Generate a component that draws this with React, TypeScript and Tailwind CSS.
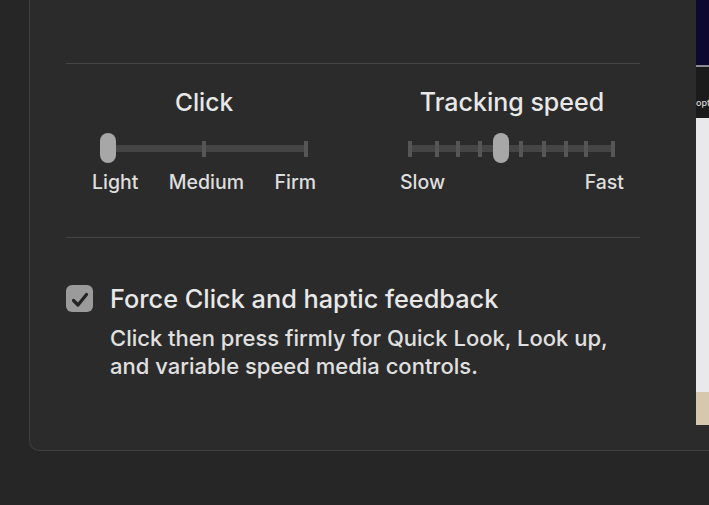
import React from 'react';

const TRACK_TICKS = [2, 29, 50, 72, 113, 136, 158, 178, 205];

function ClickSlider() {
  return (
    <div className="relative w-[208px] h-[30px] mx-auto">
      <div className="absolute left-[8px] right-[2px] top-[12px] h-[7px] bg-[#454545]" />
      <div className="absolute left-[102px] top-[8px] w-[4px] h-[16px] bg-[#565656]" />
      <div className="absolute left-[204px] top-[8px] w-[4px] h-[16px] bg-[#565656]" />
      <div className="absolute left-0 top-0 w-[16px] h-[30px] rounded-full bg-[#a7a7a7]" />
    </div>
  );
}

function TrackingSlider() {
  return (
    <div className="relative w-[208px] h-[30px] mx-auto">
      <div className="absolute left-[2px] right-[2px] top-[12px] h-[7px] bg-[#454545]" />
      {TRACK_TICKS.map((x) => (
        <div
          key={x}
          className="absolute top-[8px] w-[4px] h-[16px] bg-[#565656]"
          style={{ left: x - 2 }}
        />
      ))}
      <div className="absolute left-[85px] top-0 w-[16px] h-[30px] rounded-full bg-[#a7a7a7]" />
    </div>
  );
}

export default function App() {
  return (
    <div
      className="relative w-[709px] h-[505px] overflow-hidden bg-[#262626] text-[#e8e8e8] font-medium"
      style={{ fontFamily: 'Inter, "Noto Sans", sans-serif' }}
    >
      {/* Settings panel */}
      <div className="ml-[29px] w-[720px] h-[451px] bg-[#2b2b2b] border-l border-b border-[#3e3e3e] rounded-bl-[10px]">
        <div className="ml-[36px] w-[574px] pt-[63px]">
          <div className="h-px bg-[#444444]" />

          {/* Sliders */}
          <div className="flex gap-[84px] pl-[26px] pt-[24px]">
            <div className="w-[224px]">
              <div className="text-center text-[24.5px] leading-[28px]">Click</div>
              <div className="mt-[17px]">
                <ClickSlider />
              </div>
              <div className="mt-[7px] flex justify-between text-[19.5px] leading-[24px] text-[#dedede]">
                <span>Light</span>
                <span>Medium</span>
                <span>Firm</span>
              </div>
            </div>
            <div className="w-[224px]">
              <div className="text-center text-[25px] leading-[28px]">Tracking speed</div>
              <div className="mt-[17px]">
                <TrackingSlider />
              </div>
              <div className="mt-[7px] flex justify-between text-[19.5px] leading-[24px] text-[#dedede]">
                <span>Slow</span>
                <span>Fast</span>
              </div>
            </div>
          </div>

          <div className="mt-[43px] h-px bg-[#444444]" />

          {/* Force click */}
          <div className="mt-[46px] flex gap-[17px]">
            <div className="mt-[1px] w-[27px] h-[27px] rounded-[6px] bg-[#9b9b9b] flex items-center justify-center">
              <svg width="18" height="16" viewBox="0 0 18 16" fill="none" className="mt-[2px]">
                <path d="M2.5 8.5 L7 13 L15.5 2.5" stroke="#242424" strokeWidth="3.2" strokeLinecap="round" strokeLinejoin="round" />
              </svg>
            </div>
            <div>
              <div className="text-[25.3px] leading-[30px]">Force Click and haptic feedback</div>
              <div className="mt-[10px] text-[22px] leading-[28px] text-[#e0e0e0]">
                Click then press firmly for Quick Look, Look up,
                <br />
                and variable speed media controls.
              </div>
            </div>
          </div>
        </div>
      </div>

      {/* Window behind, on the right edge */}
      <div className="absolute left-[696px] top-0 w-[13px] h-[425px] flex flex-col overflow-hidden">
        <div className="h-[65px] bg-[#0c0830]" />
        <div className="h-[2px] bg-[#8d8d93]" />
        <div className="h-[51px] bg-[#1b1b1b] flex items-end pb-[8px]">
          <span className="text-[9px] leading-[14px] text-[#d8d8d8] whitespace-nowrap">opt</span>
        </div>
        <div className="h-[274px] bg-[#e9e9eb]" />
        <div className="h-[33px] bg-[#d6c8ae]" />
      </div>
    </div>
  );
}
